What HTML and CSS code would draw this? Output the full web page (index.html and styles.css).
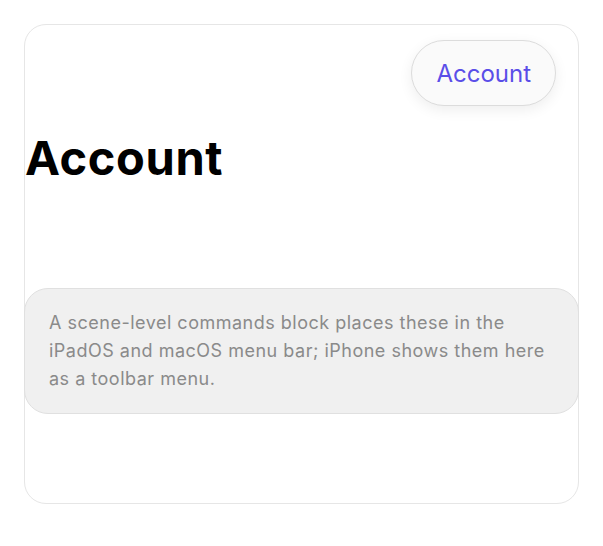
FILE: index.html
```html
<!DOCTYPE html>
<html>
<head>
<meta charset="utf-8">
<link rel="stylesheet" href="styles.css">
</head>
<body>
<div class="card">
  <div class="toolbar">
    <button class="pill">Account</button>
  </div>
  <h1 class="title">Account</h1>
  <div class="note">A scene-level commands block places these in the iPadOS and macOS menu bar; iPhone shows them here as a toolbar menu.</div>
</div>
</body>
</html>
```

FILE: styles.css
```css
* { box-sizing: border-box; }
html, body { margin: 0; padding: 0; background: #fff; }
body { padding: 24px; font-family: Inter, "Liberation Sans", sans-serif; }
.card {
  width: 555px;
  height: 480px;
  border: 1px solid #e6e6e6;
  border-radius: 22px;
  display: flex;
  flex-direction: column;
}
.toolbar {
  display: flex;
  justify-content: flex-end;
  padding: 15px 22px 0 0;
}
.pill {
  height: 66px;
  padding: 0 24px;
  border-radius: 33px;
  border: 1px solid #dcdcdc;
  background: #fafafa;
  box-shadow: 0 4px 14px rgba(0,0,0,0.07);
  color: #5a4ee8;
  font-family: Inter, "Liberation Sans", sans-serif;
  font-size: 24px;
  font-weight: 400;
}
.title {
  margin: 22px 0 0 0;
  font-size: 47px;
  font-weight: 700;
  line-height: 60px;
  color: #000;
  letter-spacing: 0.6px;
}
.note {
  margin-top: 100px;
  margin-left: -1px;
  margin-right: -1px;
  background: #f0f0f0;
  border: 1px solid #e0e0e0;
  border-radius: 24px;
  padding: 20px 24px 20px 24px;
  color: #8a8a8a;
  font-size: 18px;
  line-height: 28px;
  letter-spacing: 0.5px;
}
```
